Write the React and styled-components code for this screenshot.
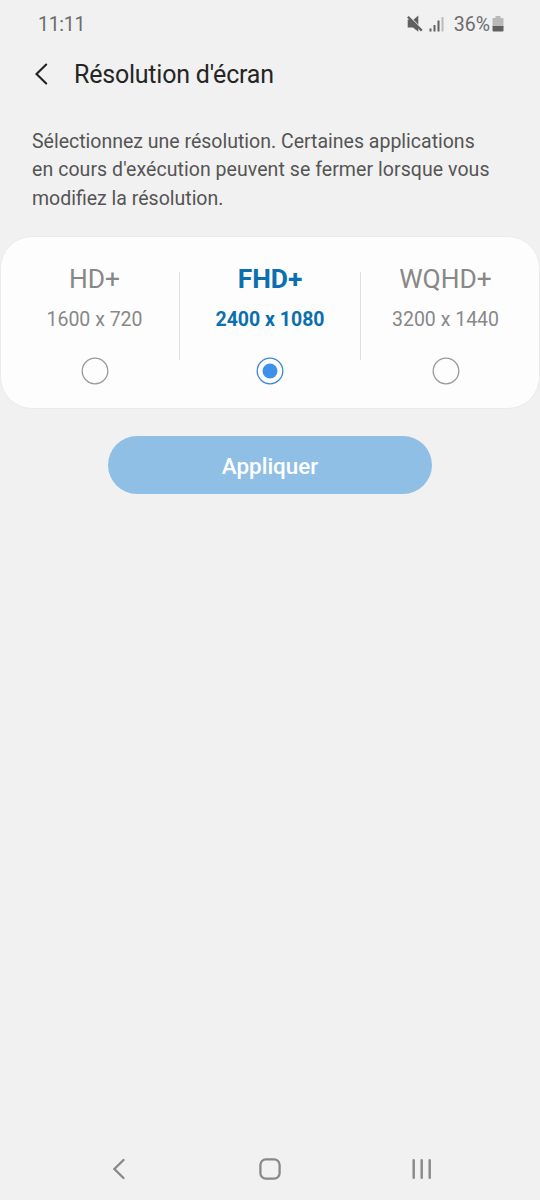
import React, { useState } from 'react';
import styled, { createGlobalStyle } from 'styled-components';

const resolutions = [
  { name: 'HD+', size: '1600 x 720' },
  { name: 'FHD+', size: '2400 x 1080' },
  { name: 'WQHD+', size: '3200 x 1440' },
];

const App = () => {
  const [selected, setSelected] = useState('FHD+');

  return (
    <Screen>
      <GlobalStyle />
      <StatusBar>
        <Clock>11:11</Clock>
        <StatusIcons />
        <BatteryLevel>36%</BatteryLevel>
        <BatteryIcon />
      </StatusBar>
      <Header>
        <BackButton aria-label="Retour">
          <svg width="14" height="22" viewBox="0 0 14 22" fill="none" stroke="#222" strokeWidth="2.1" strokeLinecap="round">
            <path d="M12.200 1.600 2.500 11l9.700 9.400" />
          </svg>
        </BackButton>
        <Title>Résolution d'écran</Title>
      </Header>
      <Description>
        <Line>Sélectionnez une résolution. Certaines applications</Line>
        <Line $wide>en cours d'exécution peuvent se fermer lorsque vous</Line>
        <Line>modifiez la résolution.</Line>
      </Description>
      <Card>
        {resolutions.map(({ name, size }, index) => (
          <React.Fragment key={name}>
            {index > 0 && <Divider />}
            <Option onClick={() => setSelected(name)}>
              <OptionName $active={selected === name}>{name}</OptionName>
              <OptionSize $active={selected === name}>{size}</OptionSize>
              <Radio width="28" height="28" viewBox="0 0 28 28" $active={selected === name}>
                <circle cx="14" cy="14" r="12.800" />
                {selected === name && <RadioDot cx="14" cy="14" r="7.500" />}
              </Radio>
            </Option>
          </React.Fragment>
        ))}
      </Card>
      <ApplyButton>Appliquer</ApplyButton>
      <NavBar>
        <svg width="14" height="22" viewBox="0 0 14 22" fill="none" stroke="#888" strokeWidth="2.3" strokeLinecap="round">
          <path d="M10.500 2 1.400 11l9.100 9" />
        </svg>
        <svg width="22" height="22" viewBox="0 0 22 22" fill="none" stroke="#888" strokeWidth="2.3">
          <rect x="1.400" y="1.400" width="19.200" height="19.200" rx="5.500" />
        </svg>
        <svg width="20" height="22" viewBox="0 0 20 22" fill="none" stroke="#888" strokeWidth="2.4" strokeLinecap="round">
          <path d="M1.700 2.200v17.600M9.700 2.200v17.600M17.700 2.200v17.600" />
        </svg>
      </NavBar>
    </Screen>
  );
};

const StatusIcons = () => (
  <svg width="40" height="18" viewBox="0 0 40 18">
    {/* muted speaker */}
    <path d="M1.700 4.500h3.600l7 7v5.200L7 12.600H1.700z" fill="#606060" />
    <path d="M7.400 4.800 12.300 0.600v9.400z" fill="#606060" />
    <path d="M3.600 1.600 17 14.600" stroke="#f1f1f1" strokeWidth="1" />
    <path d="M1.900 1.700 15.800 15.600" stroke="#606060" strokeWidth="2.300" />
    {/* signal bars */}
    <path d="M24.500 13.500v3M28.500 10v6.500M32.500 5.500v11" stroke="#606060" strokeWidth="2" />
    <path d="M36.500 2v14.500" stroke="#bbb" strokeWidth="2" />
  </svg>
);

const BatteryIcon = () => (
  <svg width="12" height="18" viewBox="0 0 12 18">
    <path d="M0.500 4q0-1 1-1H3.500V1h5v2h2q1 0 1 1v8h-11z" fill="#b9b9b9" />
    <path d="M0.500 11h11v4.500q0 1-1 1h-9q-1 0-1-1z" fill="#606060" />
  </svg>
);

const GlobalStyle = createGlobalStyle`
  * {
    box-sizing: border-box;
  }
  body {
    margin: 0;
    background: #f1f1f1;
    font-family: Roboto, sans-serif;
  }
`;

const Screen = styled.div`
  display: flex;
  flex-direction: column;
  width: 540px;
  height: 1200px;
  background: #f1f1f1;
`;

const StatusBar = styled.div`
  display: flex;
  align-items: center;
  height: 47px;
  padding: 0 36px 0 38px;
  color: #6c6c6c;
  font-size: 19.5px;
`;

const Clock = styled.span`
  flex: 1;
  padding-top: 2px;
  letter-spacing: -0.3px;
`;

const BatteryLevel = styled.span`
  margin: 0 2px 0 8px;
  padding-top: 2px;
`;

const Header = styled.header`
  display: flex;
  align-items: center;
  height: 54px;
  padding-left: 34px;
`;

const BackButton = styled.button`
  display: flex;
  width: 40px;
  padding: 0;
  border: none;
  background: none;
`;

const Title = styled.h1`
  margin: 0;
  color: #252525;
  font-size: 25px;
  font-weight: 400;
  letter-spacing: -0.22px;
`;

const Description = styled.p`
  margin: 26.5px 32px 23px;
  color: #555;
  font-size: 19.5px;
  line-height: 28.500px;
  white-space: nowrap;
`;

const Line = styled.span`
  display: block;
  letter-spacing: ${(props) => (props.$wide ? '0.06px' : '0')};
`;

const Card = styled.div`
  display: flex;
  height: 173px;
  padding: 0 9px;
  border: 1px solid #ebebeb;
  border-radius: 32px;
  background: #fdfdfd;
`;

const Divider = styled.div`
  width: 1px;
  height: 88px;
  margin-top: 35px;
  background: #e0e0e0;
`;

const Option = styled.div`
  display: flex;
  flex-direction: column;
  align-items: center;
  width: 169px;
  cursor: pointer;

  &:nth-child(3) {
    width: 180px;
  }
`;

const OptionName = styled.div`
  margin-top: 26px;
  color: ${(props) => (props.$active ? '#0b6fb0' : '#888')};
  font-size: 26.4px;
  font-weight: ${(props) => (props.$active ? 700 : 400)};
  line-height: 32px;
`;

const OptionSize = styled.div`
  margin-top: 13px;
  color: ${(props) => (props.$active ? '#0b6fb0' : '#888')};
  font-size: 19.5px;
  font-weight: ${(props) => (props.$active ? 700 : 400)};
  line-height: 24px;
`;

const Radio = styled.svg`
  margin-top: 24.5px;
  fill: none;
  stroke: ${(props) => (props.$active ? '#3d89cf' : '#999')};
  stroke-width: 1.3px;
`;

const RadioDot = styled.circle`
  fill: #3e91e8;
  stroke: none;
`;

const ApplyButton = styled.button`
  width: 324px;
  height: 58px;
  margin: 27px auto 0;
  padding: 2px 0 0;
  border: none;
  border-radius: 29px;
  background: #90bfe5;
  color: #fff;
  font: 500 22.4px Roboto, sans-serif;
`;

const NavBar = styled.nav`
  display: flex;
  justify-content: space-between;
  align-items: center;
  height: 62px;
  margin-top: auto;
  padding: 0 108px 0 113px;
`;

export default App;
